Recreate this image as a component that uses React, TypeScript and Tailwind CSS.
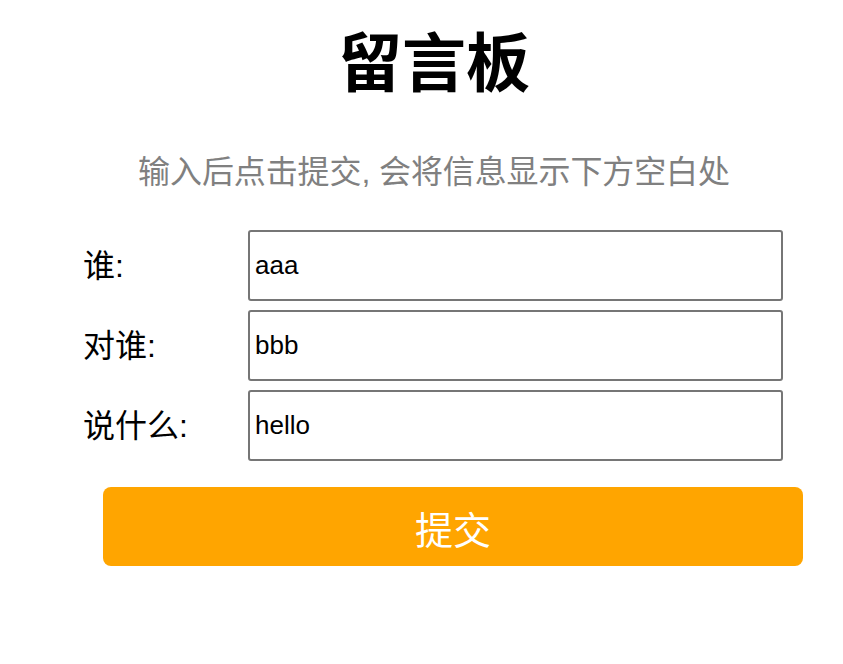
export default function App() {
  const cjk = "font-['Liberation_Sans','Noto_Sans_CJK_SC',sans-serif]";
  const rows = [
    { label: "谁:", value: "aaa" },
    { label: "对谁:", value: "bbb" },
    { label: "说什么:", value: "hello" },
  ];

  return (
    <div className={`min-h-screen bg-white ${cjk}`}>
      <div className="w-[702px] ml-[83px] pt-[32px]">
        <h1 className="text-center text-[64px] leading-[64px] font-bold text-black">
          留言板
        </h1>
        <p className="mt-[60px] text-center text-[32px] leading-[32px] tracking-[-0.1px] text-[#808080]">
          输入后点击提交, 会将信息显示下方空白处
        </p>

        <form className="mt-[42px] flex flex-col gap-[9px]">
          {rows.map((r) => (
            <div key={r.label} className="flex items-center">
              <label className="w-[165px] text-[32px] leading-[32px] text-black">
                {r.label}
              </label>
              <input
                defaultValue={r.value}
                className="w-[535px] h-[71px] border-2 border-[#767676] rounded-[3px] pl-[5px] text-[26px] text-black font-['Liberation_Sans',sans-serif] outline-none"
              />
            </div>
          ))}
        </form>

        <button className="mt-[26px] ml-[20px] w-[700px] h-[79px] pt-[8px] rounded-[8px] bg-[#ffa500] text-white text-[38px] leading-none">
          提交
        </button>
      </div>
    </div>
  );
}
